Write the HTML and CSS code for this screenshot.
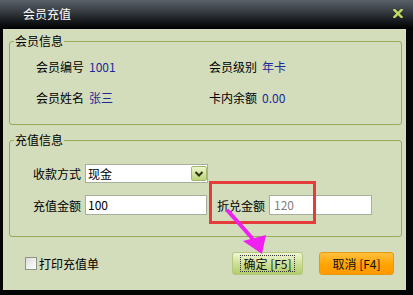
FILE: index.html
```html
<!DOCTYPE html>
<html lang="zh-CN">
<head>
<meta charset="utf-8">
<title>会员充值</title>
<link rel="stylesheet" href="styles.css">
</head>
<body>
<div class="window">
  <div class="titlebar">
    <span class="title">会员充值</span>
    <svg class="close" width="10" height="9" viewBox="0 0 10 9"><path d="M1.5 1 L8.5 8 M8.5 1 L1.5 8" stroke="#c4dc64" stroke-width="2.4" stroke-linecap="square"/></svg>
  </div>
  <div class="content">
    <fieldset class="group group-info">
      <legend>会员信息</legend>
      <div class="info-grid">
        <div class="field"><span class="label">会员编号</span><span class="value">1001</span></div>
        <div class="field"><span class="label">会员级别</span><span class="value">年卡</span></div>
        <div class="field"><span class="label">会员姓名</span><span class="value">张三</span></div>
        <div class="field"><span class="label">卡内余额</span><span class="value">0.00</span></div>
      </div>
    </fieldset>
    <fieldset class="group group-charge">
      <legend>充值信息</legend>
      <div class="charge-body">
        <div class="charge-row">
          <span class="label">收款方式</span>
          <div class="select">
            <span>现金</span>
            <span class="select-btn"><svg width="10" height="8" viewBox="0 0 10 8"><path d="M1.5 2 L5 5.5 L8.5 2" fill="none" stroke="#2a3410" stroke-width="2"/></svg></span>
          </div>
        </div>
        <div class="charge-row row2">
          <span class="label">充值金额</span>
          <div class="input">100</div>
          <span class="label label-conv">折兑金额</span>
          <div class="input input-conv">120</div>
          <div class="mark-box"></div>
          <svg class="mark-arrow" width="50" height="50" viewBox="0 0 50 50"><path d="M2 1 L26 28" stroke="#f020f0" stroke-width="4" stroke-linecap="round"/><polygon points="17,31 40,25 36,44" fill="#f020f0"/></svg>
        </div>
      </div>
    </fieldset>
    <div class="footer">
      <label class="check"><span class="checkbox"></span>打印充值单</label>
      <div class="buttons">
        <button class="btn btn-ok"><span class="focus">确定 [F5]</span></button>
        <button class="btn btn-cancel">取消 [F4]</button>
      </div>
    </div>
  </div>
</div>
</body>
</html>
```
FILE: styles.css
```css
* { box-sizing: border-box; }
html, body { margin: 0; padding: 0; background: #000; }
body { font-family: "Noto Sans CJK SC", "DejaVu Sans", sans-serif; font-size: 12px; color: #000; }
.window {
  width: 413px; height: 295px;
  background: #050505;
  display: flex; flex-direction: column;
  overflow: hidden;
}
.titlebar {
  height: 29px; flex: none;
  background: linear-gradient(to bottom, #5a6168 0%, #3b4147 35%, #14171a 75%, #000 100%);
  display: flex; align-items: center; justify-content: space-between;
  padding: 0 10px 0 23px;
}
.title { color: #fff; font-size: 12px; line-height: 16px; margin-top: -1px; }
.close { display: block; margin-top: -3px; }
.content {
  flex: 1;
  margin: 0 7px 5px 3px;
  background: #d3dcbb;
  padding: 4px 4px 0 6px;
  display: flex; flex-direction: column;
}
.group {
  margin: 0; padding: 0;
  border: 1px solid #98ab5a;
  border-radius: 3px;
  min-width: 0;
}
.group legend {
  margin-left: 4px; padding: 0 1px;
  line-height: 16px; font-size: 12px;
}
.group-info { height: 92px; }
.info-grid {
  display: grid;
  grid-template-columns: 173px 1fr;
  row-gap: 11px;
  padding: 7px 0 0 26px;
}
.field { display: flex; align-items: center; gap: 5px; height: 20px; }
.value { color: #1a2a9a; }
.group-charge { margin-top: 7px; height: 105px; }
.charge-body { padding: 16px 0 0 23px; }
.charge-row { display: flex; align-items: center; gap: 4px; height: 19px; }
.row2 { margin-top: 12px; height: 20px; position: relative; }
.select {
  width: 123px; height: 19px;
  background: #fff;
  border: 1px solid #a7ae9c;
  display: flex; align-items: center; justify-content: space-between;
  padding: 0 0 0 2px;
}
.select-btn {
  width: 16px; height: 15px;
  border: 1px solid #a3b770;
  border-radius: 2px;
  background: linear-gradient(to bottom, #eef5cc, #bcd37a);
  display: flex; align-items: center; justify-content: center;
}
.input {
  width: 122px; height: 20px;
  background: #fff;
  border: 1px solid #a7ae9c;
  padding: 0 2px;
  line-height: 18px;
}
.label-conv { margin-left: 6px; }
.input-conv { width: 103px; color: #808080; padding-left: 4px; }
.mark-box {
  position: absolute;
  left: 176px; top: -14px;
  width: 107px; height: 43px;
  border: 3px solid #e63b3b;
  pointer-events: none;
}
.mark-arrow {
  position: absolute;
  left: 193px; top: 15px;
  overflow: visible;
}
.footer {
  flex: 1;
  display: flex; align-items: center;
  padding: 0 8px 1px 16px;
}
.check { display: flex; align-items: center; gap: 2px; }
.checkbox {
  width: 12px; height: 13px;
  border: 1px solid #8c9484;
  background: linear-gradient(135deg, #dcdcdc, #ffffff);
}
.buttons { margin-left: auto; display: flex; gap: 16px; }
.btn {
  height: 23px;
  font-family: inherit; font-size: 12px;
  border-radius: 3px;
  padding: 0;
  display: flex; align-items: center; justify-content: center;
  color: #111;
}
.btn-ok {
  width: 71px;
  border: 1px solid #b4c880;
  background: linear-gradient(to bottom, #f0f6d4, #c9dc8c 60%, #b4cc6c);
}
.focus { border: 1px dotted #333; padding: 0 2px; line-height: 15px; }
.btn-cancel {
  width: 75px;
  border: 1px solid #e79a10;
  background: linear-gradient(to bottom, #ffc040, #ffa400 55%, #ff9a00);
}
```
